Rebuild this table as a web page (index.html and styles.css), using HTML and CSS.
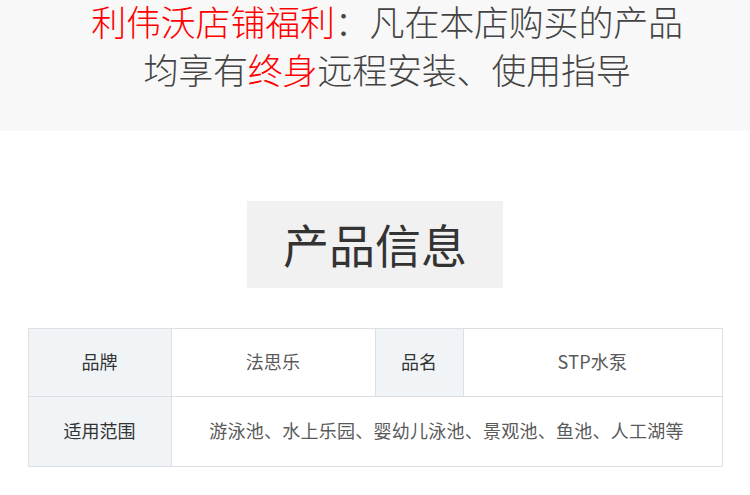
FILE: index.html
```html
<!DOCTYPE html>
<html lang="zh-CN">
<head>
  <meta charset="UTF-8" />
  <meta name="viewport" content="width=device-width, initial-scale=1.0"/>
  <title>产品信息</title>
  <link rel="stylesheet" href="styles.css">
</head>
<body>

  <!-- 店铺福利 -->
  <div class="notice">
    <p class="line-1"><span class="red">利伟沃店铺福利</span>：凡在本店购买的产品</p>
    <p class="line-2">均享有<span class="red">终身</span>远程安装、使用指导</p>
  </div>

  <h2 class="section-title">产品信息</h2>

  <table class="info">
    <colgroup>
      <col class="c1"><col class="c2"><col class="c3"><col class="c4">
    </colgroup>
    <tr class="row-1">
      <th>品牌</th>
      <td>法思乐</td>
      <th>品名</th>
      <td>STP水泵</td>
    </tr>
    <tr class="row-2">
      <th>适用范围</th>
      <td colspan="3">游泳池、水上乐园、婴幼儿泳池、景观池、鱼池、人工湖等</td>
    </tr>
  </table>

</body>
</html>
```

FILE: styles.css
```css
body {
  margin: 0;
  background: #fff;
  font-family: "Noto Sans CJK SC", "Noto Sans", sans-serif;
}

/* 顶部福利 */
.notice {
  height: 131px;
  padding-left: 24px;
  box-sizing: border-box;
  background: #f8f8f8;
  text-align: center;
  color: #444;
  font-size: 35px;
  font-weight: 300;
  letter-spacing: -0.2px;
}
.notice p {
  margin: 0;
}
.notice .line-1 {
  line-height: 42px;
}
.notice .line-2 {
  line-height: 54px;
}
.notice .red {
  color: #f00;
}

/* 标题 */
.section-title {
  width: 256px;
  height: 87px;
  margin: 70px auto 40px;
  background: #f1f1f1;
  color: #333;
  font-size: 46px;
  font-weight: normal;
  line-height: 84px;
  text-align: center;
}

/* 参数表 */
.info {
  width: 694px;
  margin: 0 auto;
  border-collapse: collapse;
  table-layout: fixed;
  font-size: 18px;
}
.info .c1 { width: 143px; }
.info .c2 { width: 204px; }
.info .c3 { width: 88px; }
.info .c4 { width: 259px; }

.info th,
.info td {
  border: 1px solid #dcdfe3;
  padding: 0 0 3px;
  text-align: center;
}
.info th {
  background: #f1f4f7;
  color: #333;
  font-weight: normal;
}
.info td {
  color: #5a5a5a;
  letter-spacing: 0.25px;
}
.info .row-1 { height: 68px; }
.info .row-2 { height: 70px; }
```
